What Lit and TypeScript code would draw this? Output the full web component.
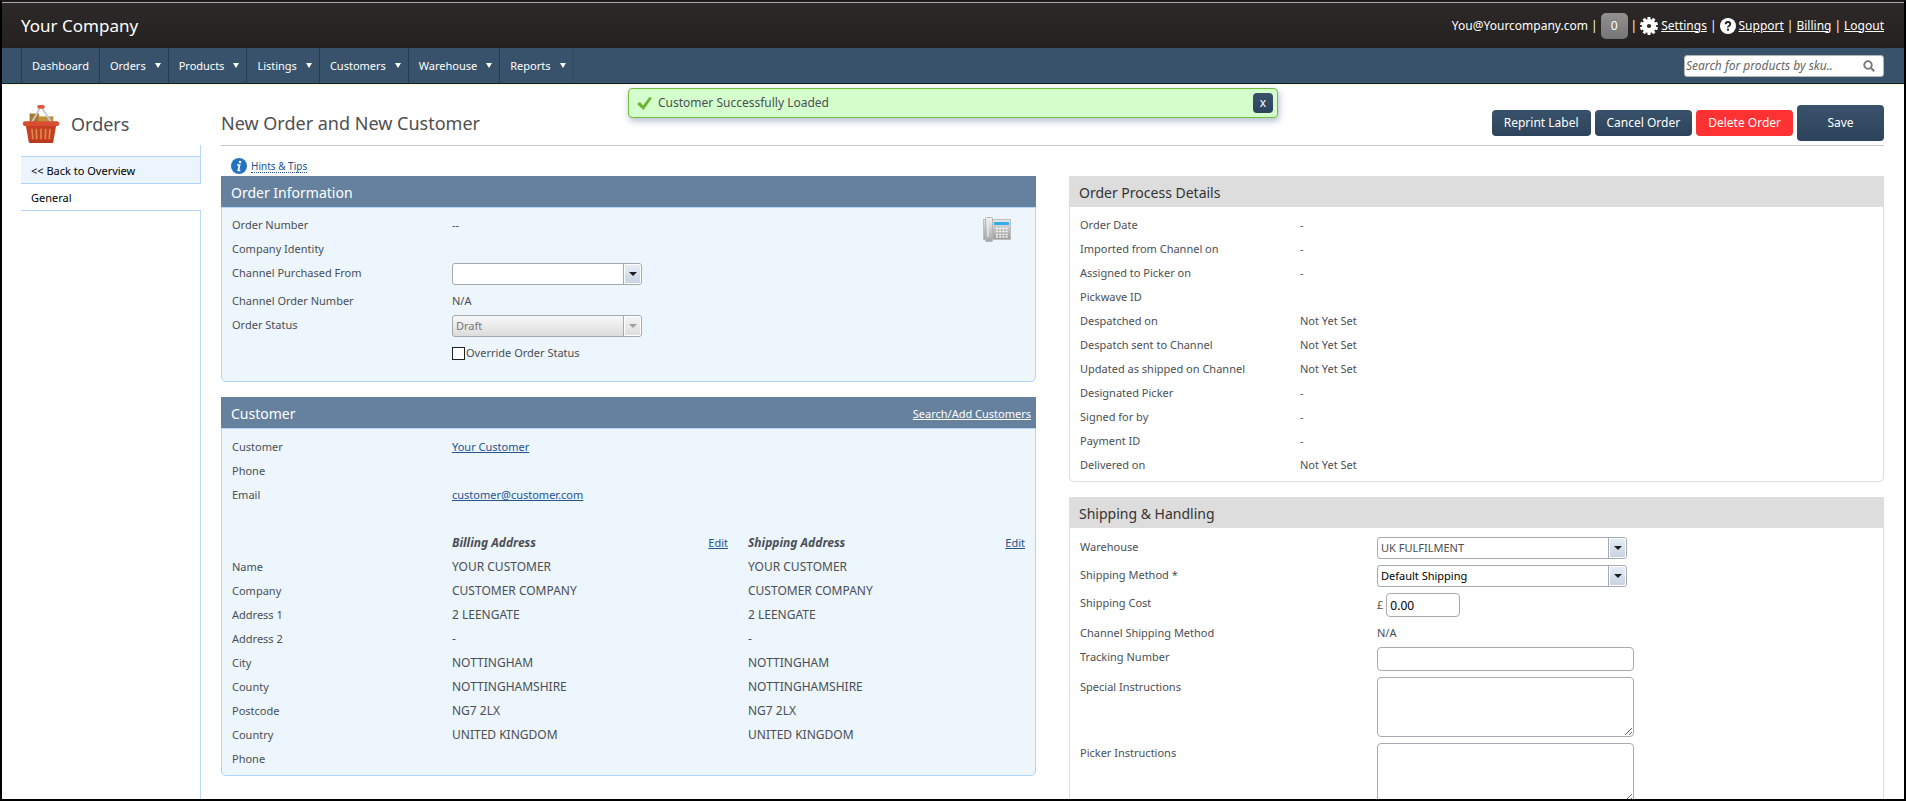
import { LitElement, html, css, nothing, svg } from "lit";
import { customElement } from "lit/decorators.js";

const menu: [string, boolean][] = [
  ["Dashboard", false],
  ["Orders", true],
  ["Products", true],
  ["Listings", true],
  ["Customers", true],
  ["Warehouse", true],
  ["Reports", true],
];

const processDetails: [string, string][] = [
  ["Order Date", "-"],
  ["Imported from Channel on", "-"],
  ["Assigned to Picker on", "-"],
  ["Pickwave ID", ""],
  ["Despatched on", "Not Yet Set"],
  ["Despatch sent to Channel", "Not Yet Set"],
  ["Updated as shipped on Channel", "Not Yet Set"],
  ["Designated Picker", "-"],
  ["Signed for by", "-"],
  ["Payment ID", "-"],
  ["Delivered on", "Not Yet Set"],
];

const address: [string, string][] = [
  ["Name", "YOUR CUSTOMER"],
  ["Company", "CUSTOMER COMPANY"],
  ["Address 1", "2 LEENGATE"],
  ["Address 2", "-"],
  ["City", "NOTTINGHAM"],
  ["County", "NOTTINGHAMSHIRE"],
  ["Postcode", "NG7 2LX"],
  ["Country", "UNITED KINGDOM"],
  ["Phone", ""],
];

const basketIcon = html`<svg class="basket" viewBox="0 0 38 42" aria-hidden="true">
  <path d="M7 10h10v10H7z" fill="#a8782c" />
  <path d="M16 13h16v8H16z" fill="#bf9140" />
  <path d="M9 20L18 4M30 20L20 4" stroke="#c6c9cf" stroke-width="2" fill="none" />
  <rect x="15" y="1" width="8" height="4" rx="2" fill="#e05a3c" />
  <path d="M3 22h32l-3 17q0 2-2 2H8q-2 0-2-2z" fill="#c63f22" />
  <rect x="0" y="18" width="38" height="5" rx="2" fill="#d94e30" />
  <path d="M9.500 26l1 11M14 26l.5 11M19 26v11M24 26l-.5 11M28.500 26l-1 11" stroke="#d98a48" stroke-width="1.800" fill="none" />
  <path d="M6 38h26l-1 3H7z" fill="#b93a20" />
</svg>`;

const gearIcon = html`<svg class="gear" viewBox="-9 -9 18 18" aria-hidden="true">
  <circle r="4.600" fill="none" stroke="#fff" stroke-width="5" />
  ${[0, 36, 72, 108, 144].map(
    (a) => svg`<path d="M-1.500 -9h3v3h-3zM-1.500 6h3v3h-3z" fill="#fff" transform="rotate(${a})" />`
  )}
</svg>`;

const phoneIcon = html`<svg class="phone" viewBox="0 0 28 25" aria-hidden="true">
  <defs>
    <linearGradient id="shell" x1="0" y1="0" x2="0" y2="1">
      <stop offset="0" stop-color="#e8e8e8" />
      <stop offset="1" stop-color="#9a9a9a" />
    </linearGradient>
    <linearGradient id="handset" x1="0" y1="0" x2="0" y2="1">
      <stop offset="0" stop-color="#f4f4f4" />
      <stop offset="1" stop-color="#a4a4a4" />
    </linearGradient>
  </defs>
  <rect x="0.500" y="2.500" width="27" height="20" fill="url(#shell)" stroke="#bdbdbd" />
  <rect x="11" y="5" width="15" height="3" fill="#2fb0e6" />
  <path d="M13 11.500h12M13 14.500h12M13 17.500h12M13 20h12" stroke="#fafafa" stroke-width="1.600" stroke-dasharray="2 1.200" />
  <rect x="2.500" y="0.500" width="7" height="24" rx="1" fill="url(#handset)" stroke="#b4b4b4" />
  <path d="M5 6v14" stroke="#f6f6f6" />
</svg>`;

@customElement("app-root")
export class AppRoot extends LitElement {
  static styles = css`
    :host {
      display: block;
      height: 100vh;
      box-sizing: border-box;
      overflow: hidden;
      border: 2px solid #000;
      border-top-color: #1c1a1a;
      background: #fff;
      font: 11px/24px "Noto Sans", "Open Sans", sans-serif;
      color: #4b4f54;
    }
    * {
      box-sizing: border-box;
    }
    h1, h2, p, ul {
      margin: 0;
      padding: 0;
      font-weight: normal;
    }
    button, input, select, textarea {
      font: inherit;
      color: inherit;
      margin: 0;
    }
    svg {
      display: block;
      flex: none;
    }
    a {
      color: #24548f;
    }
    .top {
      display: flex;
      align-items: center;
      justify-content: space-between;
      height: 46px;
      padding: 0 20px 0 19px;
      border-top: 1px solid #aaa;
      background: linear-gradient(#2e2929, #23211f);
      color: #fff;
    }
    .company {
      font-size: 17px;
    }
    .account {
      display: flex;
      align-items: center;
      gap: 3px;
      font-size: 12px;
    }
    .account a {
      color: #fff;
    }
    .count {
      width: 27px;
      height: 26px;
      padding: 0;
      border: 0;
      border-radius: 5px;
      background: linear-gradient(#919191, #757575);
    }
    .gear {
      width: 18px;
      height: 18px;
    }
    .help {
      width: 16px;
      height: 16px;
    }
    .nav {
      display: flex;
      align-items: center;
      justify-content: space-between;
      height: 36px;
      padding: 0 20px 0 19px;
      background: #39526b;
      border-bottom: 1px solid #0c2233;
      box-shadow: 0 1px #fdf6cf;
      color: #fff;
    }
    .menu {
      display: flex;
      list-style: none;
      height: 100%;
    }
    .menu a {
      display: flex;
      align-items: center;
      gap: 9px;
      height: 100%;
      padding: 0 10px;
      border-left: 1px solid #223d57;
      color: #fff;
      text-decoration: none;
    }
    .menu .drop {
      padding-right: 7px;
    }
    .menu li:last-child {
      border-right: 1px solid #344b64;
    }
    .caret {
      border: 3px solid transparent;
      border-top: 5px solid #fff;
      border-bottom: 0;
    }
    .search {
      display: flex;
      align-items: center;
      width: 200px;
      height: 22px;
      padding: 0 8px 0 1px;
      border: 1px solid #b5b5b5;
      border-radius: 3px;
      background: #fff;
    }
    .search input {
      flex: 1;
      min-width: 0;
      padding: 0;
      border: 0;
      outline: 0;
      background: none;
      font: italic 12px/18px "Noto Sans", sans-serif;
      color: #555;
    }
    .search input::placeholder {
      color: #666;
    }
    .search svg {
      width: 12px;
      height: 12px;
    }
    .toast {
      position: absolute;
      top: 88px;
      left: 50%;
      transform: translateX(-50%);
      display: flex;
      align-items: center;
      gap: 6px;
      width: 650px;
      height: 30px;
      padding: 0 4px 0 8px;
      border: 1px solid #74bd3c;
      box-shadow: 1px 3px 7px rgba(60, 90, 130, 0.4);
      border-radius: 4px;
      background: #d4ffcc;
      font-size: 12px;
    }
    .toast p {
      flex: 1;
    }
    .toast button {
      width: 20px;
      height: 20px;
      padding: 0;
      border: 0;
      border-radius: 4px;
      background: linear-gradient(#39526b, #2d435b);
      color: #fff;
      line-height: 20px;
    }
    .tick {
      width: 15px;
      height: 13px;
    }
    .page {
      display: grid;
      grid-template-columns: 180px minmax(0, 1fr);
      gap: 20px;
      padding: 0 20px 0 19px;
      height: calc(100% - 82px);
    }
    .side {
      display: flex;
      flex-direction: column;
    }
    .title {
      display: flex;
      align-items: center;
      gap: 11px;
      height: 60px;
      padding: 20px 0 0 1px;
      font-size: 18px;
    }
    .basket {
      width: 38px;
      height: 40px;
    }
    .links {
      flex: 1;
      display: flex;
      flex-direction: column;
      margin-top: 1px;
    }
    .links::before {
      content: "";
      height: 11px;
      border-right: 1px solid #b9dcfd;
    }
    .links::after {
      content: "";
      flex: 1;
      border-right: 1px solid #b9dcfd;
    }
    .links a {
      height: 27px;
      padding-left: 10px;
      border-bottom: 1px solid #b0d6fb;
      color: #000;
      text-decoration: none;
      line-height: 28px;
    }
    .links .back {
      height: 28px;
      border-top: 1px solid #b0d6fb;
      border-right: 1px solid #b0d6fb;
      background: #ecf4fd;
    }
    .head {
      display: flex;
      align-items: center;
      justify-content: space-between;
      height: 62px;
      padding-top: 17px;
      border-bottom: 1px solid #c9c9c9;
    }
    .head h1 {
      font-size: 18px;
      color: #4f4f4f;
    }
    .actions {
      display: flex;
      align-items: center;
      gap: 4px;
    }
    .actions button {
      height: 26px;
      padding: 0 12px;
      border: 0;
      border-radius: 4px;
      background: linear-gradient(#39526b, #2d435b);
      color: #fff;
      font-size: 12px;
    }
    .actions .delete {
      background: #fe3232;
    }
    .actions .save {
      width: 87px;
      height: 36px;
    }
    .hints {
      display: flex;
      align-items: center;
      gap: 4px;
      height: 30px;
      padding: 10px 0 0 10px;
      font-size: 10px;
    }
    .hints svg {
      width: 16px;
      height: 16px;
    }
    .hints a {
      height: 14px;
      line-height: 14px;
      border-bottom: 1px dotted #24548f;
      text-decoration: none;
    }
    .columns {
      display: grid;
      grid-template-columns: repeat(2, minmax(0, 1fr));
      gap: 33px;
    }
    .stack {
      display: flex;
      flex-direction: column;
      gap: 15px;
    }
    .bar {
      display: flex;
      align-items: center;
      justify-content: space-between;
      height: 31px;
      padding: 2px 5px 0 10px;
      background: #65819d;
      color: #fff;
    }
    .bar h2 {
      font-size: 14px;
    }
    .bar a {
      color: #fff;
      font-size: 11px;
    }
    .body {
      padding: 6px 10px 10px;
      border: 1px solid #aed5fa;
      border-radius: 0 0 5px 5px;
      background: #edf5fd;
    }
    .grey .bar {
      background: #ddd;
      color: #333;
    }
    .grey .body {
      border-color: #ddd;
      border-top: 0;
      background: #fff;
      padding: 6px 10px 4px;
    }
    .row {
      display: grid;
      grid-template-columns: 220px minmax(0, 1fr);
      min-height: 24px;
    }
    .wide .row {
      grid-template-columns: 297px minmax(0, 1fr);
    }
    .wide .body {
      padding-top: 7px;
    }
    .info {
      display: grid;
      grid-template-columns: minmax(0, 1fr) 28px;
      padding: 5px 24px 16px 10px;
    }
    .phone {
      width: 28px;
      height: 25px;
      margin-top: 4px;
    }
    .field {
      display: flex;
      align-items: center;
      gap: 3px;
      padding: 2px 0 4px;
      line-height: 20px;
    }
    .select {
      display: grid;
      width: 190px;
      height: 22px;
    }
    .wide .select {
      width: 250px;
    }
    select {
      grid-area: 1 / 1;
      appearance: none;
      height: 22px;
      padding: 0 20px 0 3px;
      border: 1px solid #a5a9b1;
      border-radius: 3px;
      background: #fff;
      line-height: 18px;
      opacity: 1;
    }
    .dark {
      color: #000;
    }
    .arrow {
      grid-area: 1 / 1;
      justify-self: end;
      align-self: center;
      display: grid;
      place-items: center;
      width: 17px;
      height: 20px;
      margin-right: 1px;
      border: 1px solid #fff;
      border-radius: 0 2px 2px 0;
      background: linear-gradient(#e6edf6, #c8d3e2);
      box-shadow: -1px 0 #a5a9b1;
      pointer-events: none;
    }
    .arrow::after {
      content: "";
      border: 4px solid transparent;
      border-top-color: #1d1d1d;
      border-bottom: 0;
    }
    .off select {
      background: linear-gradient(#f8f8f8, #dcdcdc);
      color: #777;
    }
    .off .arrow {
      background: linear-gradient(#f4f4f4, #dedede);
    }
    .off .arrow::after {
      border-top-color: #a0a0a0;
    }
    .check {
      display: flex;
      align-items: center;
      gap: 1px;
    }
    .check input {
      appearance: none;
      width: 13px;
      height: 13px;
      border: 1px solid #222;
      background: #fff;
    }
    .text {
      width: 257px;
      height: 24px;
      padding: 0 3px;
      border: 1px solid #a9a9b1;
      border-radius: 4px;
      background: #fff;
      color: #000;
    }
    .cost {
      width: 74px;
      font-size: 12px;
    }
    .area {
      display: block;
      height: 60px;
      resize: vertical;
    }
    .addresses {
      width: 100%;
      border-collapse: collapse;
      table-layout: fixed;
    }
    .addresses th, .addresses td {
      height: 24px;
      padding: 0 20px 0 0;
      text-align: left;
      font-weight: normal;
    }
    .addresses .last {
      padding-right: 0;
    }
    .addresses td {
      font-size: 12px;
    }
    .labels {
      width: 220px;
    }
    .billing {
      width: 296px;
    }
    .kind {
      display: flex;
      justify-content: space-between;
    }
    .kind strong {
      font-style: italic;
      font-size: 12px;
    }
    .customer {
      padding-bottom: 4px;
    }
    .spacer {
      height: 24px;
    }
  `;

  private select(id: string, value: string, cls = "", disabled = false) {
    return html`<div class="select ${disabled ? "off" : ""}">
      <select id=${id} class=${cls} ?disabled=${disabled}>
        <option>${value}</option>
      </select>
      <span class="arrow"></span>
    </div>`;
  }

  private header() {
    return html`<header class="top">
        <div class="company">Your Company</div>
        <div class="account">
          <span>You@Yourcompany.com</span><span>|</span>
          <button class="count">0</button><span>|</span>
          ${gearIcon}<a href="#settings">Settings</a><span>|</span>
          <svg class="help" viewBox="0 0 16 16" aria-hidden="true">
            <circle cx="8" cy="8" r="8" fill="#fff" />
            <path d="M5.700 6.300Q5.700 4 8 4t2.300 2.100Q10.300 7.300 9 8t-1 1.500" fill="none" stroke="#222" stroke-width="1.800" />
            <rect x="7" y="10.700" width="2" height="2" fill="#222" />
          </svg>
          <a href="#support">Support</a><span>|</span>
          <a href="#billing">Billing</a><span>|</span>
          <a href="#logout">Logout</a>
        </div>
      </header>
      <nav class="nav">
        <ul class="menu">
          ${menu.map(
            ([name, drop]) => html`<li>
              <a href="#${name.toLowerCase()}" class=${drop ? "drop" : ""}
                >${name}${drop ? html`<span class="caret"></span>` : nothing}</a
              >
            </li>`
          )}
        </ul>
        <div class="search">
          <input type="text" aria-label="Search for products by sku" placeholder="Search for products by sku.." />
          <svg viewBox="0 0 12 12" aria-hidden="true">
            <circle cx="5" cy="5" r="3.800" fill="none" stroke="#777" stroke-width="1.800" />
            <path d="M7.800 7.800l3.400 3.400" stroke="#777" stroke-width="2" />
          </svg>
        </div>
      </nav>`;
  }

  private orderInformation() {
    return html`<section>
      <div class="bar"><h2>Order Information</h2></div>
      <div class="body info">
        <div>
          <div class="row"><span>Order Number</span><span>--</span></div>
          <div class="row"><span>Company Identity</span></div>
          <div class="row">
            <label for="channel">Channel Purchased From</label>
            <div class="field">${this.select("channel", "")}</div>
          </div>
          <div class="row"><span>Channel Order Number</span><span>N/A</span></div>
          <div class="row">
            <label for="status">Order Status</label>
            <div class="field">${this.select("status", "Draft", "", true)}</div>
          </div>
          <div class="row">
            <span></span>
            <label class="check"><input type="checkbox" />Override Order Status</label>
          </div>
        </div>
        ${phoneIcon}
      </div>
    </section>`;
  }

  private customer() {
    return html`<section>
      <div class="bar">
        <h2>Customer</h2>
        <a href="#search">Search/Add Customers</a>
      </div>
      <div class="body customer">
        <div class="row"><span>Customer</span><span><a href="#customer">Your Customer</a></span></div>
        <div class="row"><span>Phone</span></div>
        <div class="row">
          <span>Email</span><span><a href="mailto:customer@customer.com">customer@customer.com</a></span>
        </div>
        <div class="spacer"></div>
        <table class="addresses">
          <colgroup><col class="labels" /><col class="billing" /><col /></colgroup>
          <tr>
            <td></td>
            <th scope="col"><div class="kind"><strong>Billing Address</strong><a href="#billing-address">Edit</a></div></th>
            <th scope="col" class="last"><div class="kind"><strong>Shipping Address</strong><a href="#shipping-address">Edit</a></div></th>
          </tr>
          ${address.map(
            ([name, value]) => html`<tr>
              <th scope="row">${name}</th>
              <td>${value}</td>
              <td class="last">${value}</td>
            </tr>`
          )}
        </table>
      </div>
    </section>`;
  }

  private shipping() {
    return html`<section class="grey wide">
      <div class="bar"><h2>Shipping &amp; Handling</h2></div>
      <div class="body">
        <div class="row">
          <label for="warehouse">Warehouse</label>
          <div class="field">${this.select("warehouse", "UK FULFILMENT")}</div>
        </div>
        <div class="row">
          <label for="method">Shipping Method *</label>
          <div class="field">${this.select("method", "Default Shipping", "dark")}</div>
        </div>
        <div class="row">
          <label for="cost">Shipping Cost</label>
          <div class="field"><span>£</span><input id="cost" class="text cost" type="text" value="0.00" /></div>
        </div>
        <div class="row"><span>Channel Shipping Method</span><span>N/A</span></div>
        <div class="row">
          <label for="tracking">Tracking Number</label>
          <div class="field"><input id="tracking" class="text" type="text" /></div>
        </div>
        <div class="row">
          <label for="special">Special Instructions</label>
          <div class="field"><textarea id="special" class="text area"></textarea></div>
        </div>
        <div class="row">
          <label for="picker">Picker Instructions</label>
          <div class="field"><textarea id="picker" class="text area"></textarea></div>
        </div>
      </div>
    </section>`;
  }

  render() {
    return html`${this.header()}
      <div class="toast" role="status">
        <svg class="tick" viewBox="0 0 15 13" aria-hidden="true">
          <path d="M0 7l3-2 3 3.500L12.500 0 15 1 6.500 13z" fill="#6cb52d" />
        </svg>
        <p>Customer Successfully Loaded</p>
        <button aria-label="Close">x</button>
      </div>
      <div class="page">
        <aside class="side">
          <div class="title">${basketIcon}<span>Orders</span></div>
          <nav class="links">
            <a class="back" href="#overview">&lt;&lt; Back to Overview</a>
            <a href="#general">General</a>
          </nav>
        </aside>
        <main>
          <div class="head">
            <h1>New Order and New Customer</h1>
            <div class="actions">
              <button>Reprint Label</button>
              <button>Cancel Order</button>
              <button class="delete">Delete Order</button>
              <button class="save">Save</button>
            </div>
          </div>
          <div class="hints">
            <svg viewBox="0 0 16 16" aria-hidden="true">
              <circle cx="8" cy="8" r="8" fill="#2273c3" />
              <circle cx="9" cy="4" r="1.300" fill="#fff" />
              <path d="M6 7h2.600L7.300 12.300h2" fill="none" stroke="#fff" stroke-width="1.700" />
            </svg>
            <a href="#hints">Hints &amp; Tips</a>
          </div>
          <div class="columns">
            <div class="stack">${this.orderInformation()}${this.customer()}</div>
            <div class="stack">
              <section class="grey">
                <div class="bar"><h2>Order Process Details</h2></div>
                <div class="body">
                  ${processDetails.map(
                    ([name, value]) => html`<div class="row"><span>${name}</span><span>${value}</span></div>`
                  )}
                </div>
              </section>
              ${this.shipping()}
            </div>
          </div>
        </main>
      </div>`;
  }
}
